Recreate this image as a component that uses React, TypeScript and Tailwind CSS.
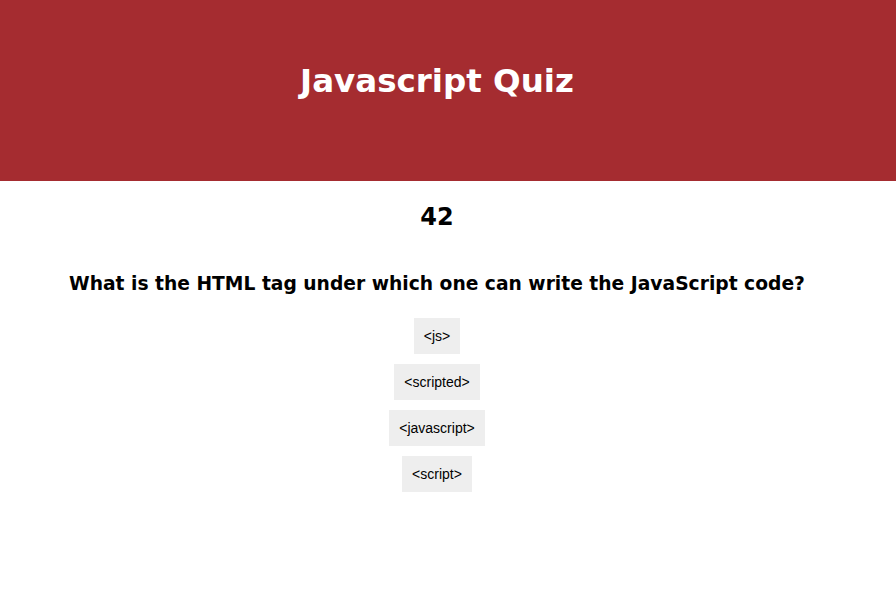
const options = ['<js>', '<scripted>', '<javascript>', '<script>']

export default function App() {
  return (
    <div className="min-h-[594px] bg-white font-['DejaVu_Sans',Verdana,sans-serif]">
      {/* Header */}
      <header className="h-[181px] bg-[#a52c30]">
        <div className="w-[874px] h-full flex items-center justify-center">
          <h1 className="text-[32.5px] font-bold text-white -mt-[18px]">Javascript Quiz</h1>
        </div>
      </header>

      <main className="w-[874px]">
        {/* Timer */}
        <div className="pt-[18px] text-center text-[24px] font-bold text-black">42</div>

        {/* Question */}
        <h2 className="mt-[35px] text-center text-[18.7px] font-bold text-black">
          What is the HTML tag under which one can write the JavaScript code?
        </h2>

        {/* Options */}
        <div className="mt-[20px] flex flex-col items-center gap-[10px]">
          {options.map((o) => (
            <button
              key={o}
              className="bg-[#eeeeee] px-[10px] h-[36px] text-[14px] text-black font-['Liberation_Sans',Arial,sans-serif]"
            >
              {o}
            </button>
          ))}
        </div>
      </main>
    </div>
  )
}
